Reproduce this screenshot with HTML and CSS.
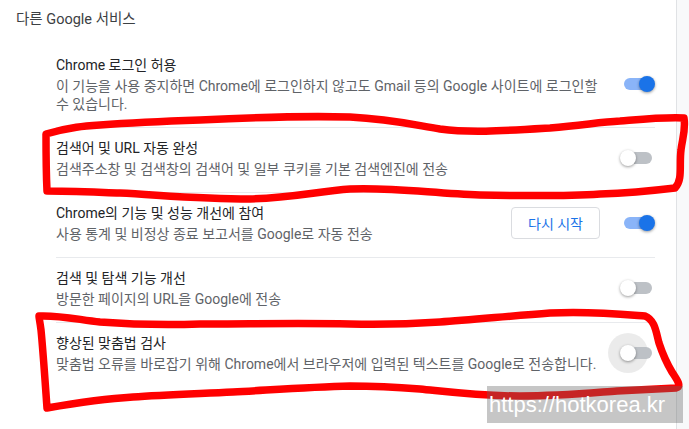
FILE: index.html
```html
<!DOCTYPE html>
<html lang="ko">
<head>
<meta charset="utf-8">
<title>다른 Google 서비스</title>
<link rel="stylesheet" href="styles.css">
</head>
<body>
<main class="card">
  <h2 class="section-title">다른 Google 서비스</h2>
  <div class="list">
    <div class="row">
      <div class="text">
        <div class="label">Chrome 로그인 허용</div>
        <div class="sub">이 기능을 사용 중지하면 Chrome에 로그인하지 않고도 Gmail 등의 Google 사이트에 로그인할 수 있습니다.</div>
      </div>
      <span class="toggle on"><span class="track"></span><span class="knob"></span></span>
    </div>
    <div class="row">
      <div class="text">
        <div class="label">검색어 및 URL 자동 완성</div>
        <div class="sub">검색주소창 및 검색창의 검색어 및 일부 쿠키를 기본 검색엔진에 전송</div>
      </div>
      <span class="toggle"><span class="track"></span><span class="knob"></span></span>
    </div>
    <div class="row">
      <div class="text">
        <div class="label">Chrome의 기능 및 성능 개선에 참여</div>
        <div class="sub">사용 통계 및 비정상 종료 보고서를 Google로 자동 전송</div>
      </div>
      <button class="button" type="button">다시 시작</button>
      <span class="toggle on"><span class="track"></span><span class="knob"></span></span>
    </div>
    <div class="row">
      <div class="text">
        <div class="label">검색 및 탐색 기능 개선</div>
        <div class="sub">방문한 페이지의 URL을 Google에 전송</div>
      </div>
      <span class="toggle"><span class="track"></span><span class="knob"></span></span>
    </div>
    <div class="row">
      <div class="text">
        <div class="label">향상된 맞춤법 검사</div>
        <div class="sub">맞춤법 오류를 바로잡기 위해 Chrome에서 브라우저에 입력된 텍스트를 Google로 전송합니다.</div>
      </div>
      <span class="toggle"><span class="ripple"></span><span class="track"></span><span class="knob"></span></span>
    </div>
  </div>
</main>

<svg class="marks" width="689" height="429" viewBox="0 0 689 429" aria-hidden="true">
  <path d="M46 134 C70 127 85 126 100 125 C140 122 170 121 200 120 C260 117 310 116 350 117 C390 119 410 124 440 129 C470 133 500 131 550 128 C585 125 600 122 620 121 C645 119 665 117 684 118 C686 130 682 140 681 150 C679 165 683 180 675 188 C650 191 630 193 600 194 C570 196 530 196 480 195 C430 193 390 187 350 189 C320 191 290 198 250 199 C200 199 160 195 120 193 C90 192 65 191 47 191 C46 170 46 150 46 134 Z"/>
  <path d="M39 316 C60 315 80 320 100 322 C140 325 170 325 200 324 C250 324 300 323 350 324 C390 325 410 324 440 322 C470 320 510 316 550 313 C590 311 620 314 645 316 C655 320 656 332 659 343 C662 352 666 362 672 372 C677 380 682 386 676 388 C660 389 640 390 617 391 C590 393 560 396 520 396 C480 396 450 392 420 389 C395 387 375 386 350 386 C310 387 270 390 233 392 C190 394 160 395 133 397 C100 399 70 404 47 408 C45 380 43 350 41 330 C40 322 39 318 39 316 Z"/>
</svg>

<div class="watermark">https://hotkorea.kr</div>
</body>
</html>
```
FILE: styles.css
```css
html, body {
  margin: 0;
  padding: 0;
}

body {
  position: relative;
  width: 689px;
  height: 429px;
  overflow: hidden;
  background: linear-gradient(to right, #eef0f2, #f8f9fa 6px);
  font-family: Roboto, "Noto Sans CJK KR", sans-serif;
  word-break: keep-all;
}

.card {
  box-sizing: border-box;
  width: 677px;
  height: 429px;
  background: #fff;
  border-right: 1px solid #e0e2e5;
}

.section-title {
  margin: 0 0 14px;
  padding: 10px 0 0 16px;
  font-size: 14.5px;
  font-weight: 400;
  line-height: 20px;
  color: #3c4043;
}

.list {
  padding: 0 21px 0 56px;
}

.row {
  display: flex;
  align-items: center;
  padding: 10px 0 14px;
  border-top: 1px solid #e8eaed;
}

.row:first-child {
  border-top: none;
  padding-top: 11px;
}

.text {
  flex: 1;
  min-width: 0;
}

.label {
  font-size: 14px;
  line-height: 20px;
  color: #232427;
}

.sub {
  margin-top: 2px;
  font-size: 14px;
  line-height: 18px;
  color: #5f6368;
}

.button {
  flex: none;
  height: 32px;
  padding: 0 16px;
  border: 1px solid #dadce0;
  border-radius: 4px;
  background: #fff;
  color: #1a73e8;
  font-family: Roboto, "Noto Sans CJK KR", sans-serif;
  font-size: 14px;
  font-weight: 400;
}

.toggle {
  position: relative;
  flex: none;
  width: 28px;
  height: 12px;
  margin-left: 24px;
  margin-right: 3px;
}

.track {
  position: absolute;
  inset: 0;
  border-radius: 6px;
  background: #bdc1c6;
}

.knob {
  position: absolute;
  top: -2px;
  left: -4px;
  width: 16px;
  height: 16px;
  border-radius: 50%;
  background: #fff;
  box-shadow: 0 1px 3px rgba(0, 0, 0, 0.4);
}

.toggle.on .track {
  background: #8ab4f8;
}

.toggle.on .knob {
  left: 15px;
  background: #1a73e8;
}

.ripple {
  position: absolute;
  top: -14px;
  left: -16px;
  width: 40px;
  height: 40px;
  border-radius: 50%;
  background: rgba(0, 0, 0, 0.08);
}

.marks {
  position: absolute;
  top: 0;
  left: 0;
  pointer-events: none;
  fill: none;
  stroke: #ff0000;
  stroke-width: 7.5;
  stroke-linejoin: round;
  stroke-linecap: round;
}

.watermark {
  position: absolute;
  left: 487px;
  top: 386px;
  width: 196px;
  height: 37px;
  padding-left: 2px;
  box-sizing: border-box;
  background: rgba(100, 100, 100, 0.37);
  color: #fff;
  font-family: "Liberation Sans", Arial, sans-serif;
  font-size: 22px;
  line-height: 37px;
  white-space: nowrap;
}
```
